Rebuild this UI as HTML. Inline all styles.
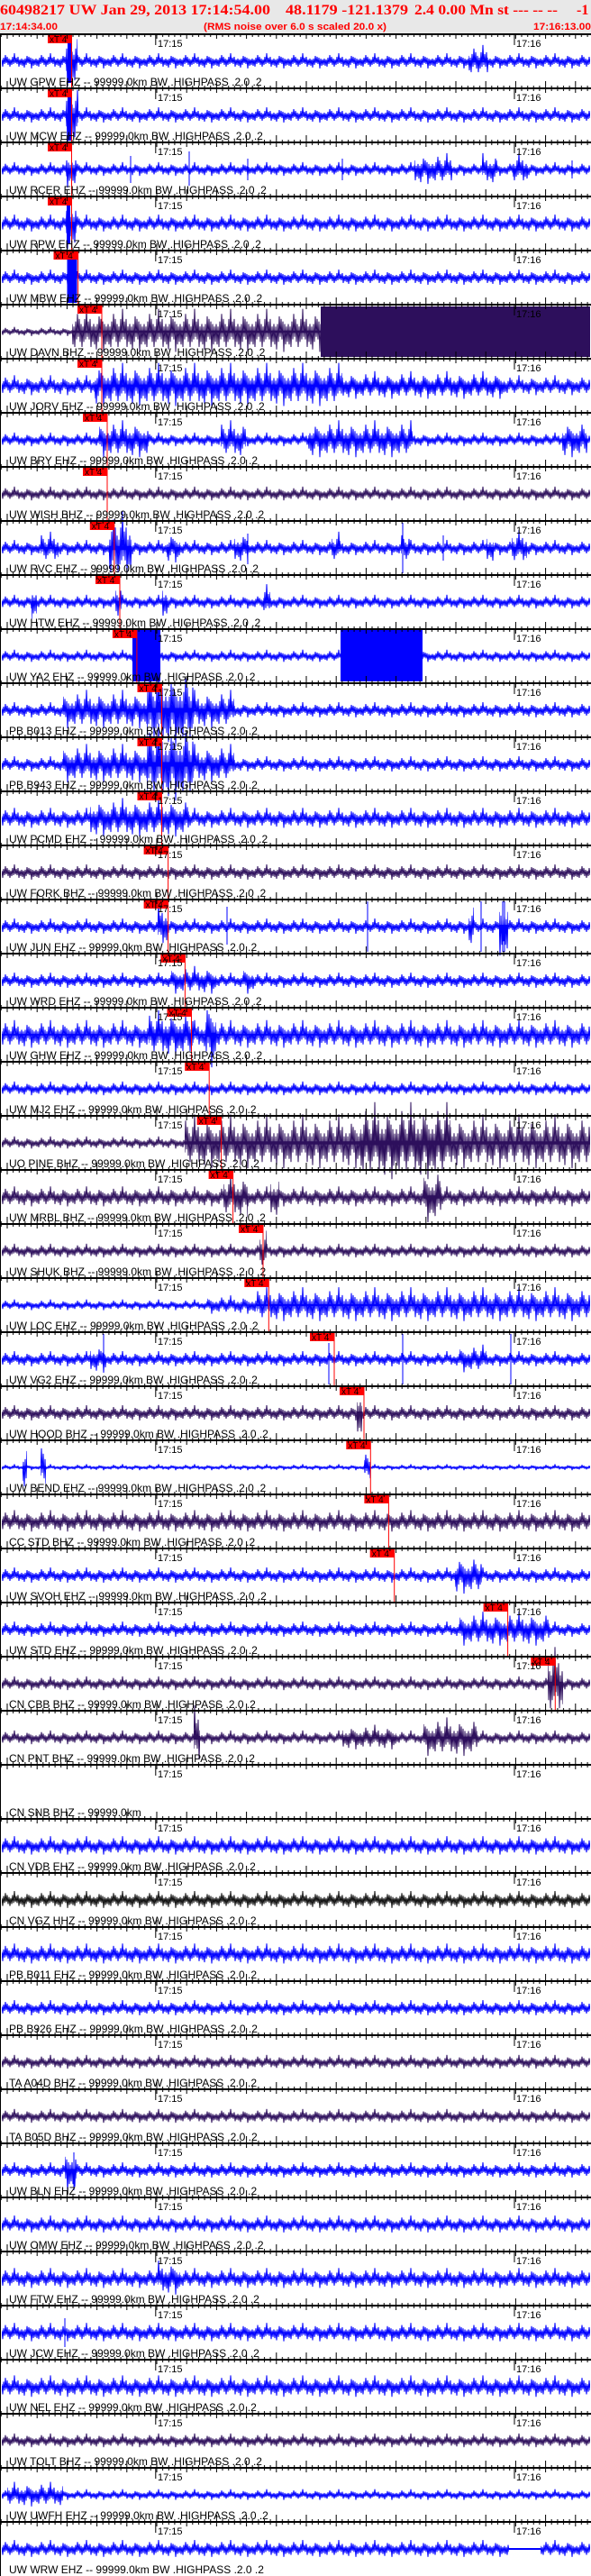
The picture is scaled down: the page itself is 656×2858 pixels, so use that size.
<!DOCTYPE html>
<html><head><meta charset="utf-8"><style>
html,body{margin:0;padding:0;background:#fff;}
svg{display:block;}
.l{font-family:"Liberation Sans",sans-serif;font-size:12px;fill:#000;}
.t{font-family:"Liberation Sans",sans-serif;font-size:11px;fill:#000;}
.x{font-family:"Liberation Sans",sans-serif;font-size:10px;fill:#000;}
.h1{font-family:"Liberation Serif",serif;font-weight:bold;font-size:16px;fill:#f00;}
.h2{font-family:"Liberation Sans",sans-serif;font-weight:bold;font-size:11px;fill:#f00;}
</style></head><body>
<svg width="656" height="2858" viewBox="0 0 656 2858" xmlns="http://www.w3.org/2000/svg">
<defs>
<polyline id="zz" fill="none" stroke-width="1" points="0,27 1,35 2,28 3,36 4,26 5,33 6,23 7,32 8,25 9,34 10,27 11,36 12,28 13,34 14,25 15,33 16,21 17,32 18,26 19,33 20,25 21,36 22,28 23,34 24,27 25,35 26,28 27,37 28,27 29,34 30,24 31,32 32,25 33,33 34,26 35,38 36,27 37,35 38,28 39,34 40,27"/>
<pattern id="pb" patternUnits="userSpaceOnUse" x="0" y="0" width="40" height="60"><use href="#zz" stroke="#0000ff"/><path d="M0 30H40" stroke="#0000ff"/></pattern>
<pattern id="pp" patternUnits="userSpaceOnUse" x="0" y="0" width="40" height="60"><use href="#zz" stroke="#2d0f5c"/><path d="M0 30H40" stroke="#2d0f5c"/></pattern>
<pattern id="pk" patternUnits="userSpaceOnUse" x="0" y="0" width="40" height="60"><use href="#zz" stroke="#111"/><path d="M0 30H40" stroke="#111"/></pattern>
<pattern id="tk" patternUnits="userSpaceOnUse" x="7.5" y="-8" width="33.2" height="14"><path d="M0.5 0V13M7.1 5V11M13.8 5V11M20.4 5V11M27 5V11" stroke="#000" stroke-width="1"/></pattern>
</defs>
<rect width="656" height="2858" fill="#fff"/>

<!-- Row 0 GPW -->
<g transform="translate(0,38)">
<rect x="2" width="653" height="60" fill="url(#pb)"/>
<rect x="73" width="13" height="60" fill="url(#pb)" transform="matrix(1 0 0 3.5 0 -75)"/>
<rect x="75" y="4" width="4" height="50" fill="#00f"/>
<rect x="520" width="22" height="60" fill="url(#pb)" transform="matrix(1 0 0 2 0 -30)"/>
</g>
<!-- Row 1 MCW -->
<g transform="translate(0,98)">
<rect x="2" width="653" height="60" fill="url(#pb)"/>
<rect x="73" width="14" height="60" fill="url(#pb)" transform="matrix(1 0 0 4 0 -90)"/>
<rect x="75" y="2" width="5" height="56" fill="#00f"/>
</g>
<!-- Row 2 RCER -->
<g transform="translate(0,158)">
<rect x="2" width="653" height="60" fill="url(#pb)" transform="matrix(1 0 0 0.9 0 3)"/>
<rect x="460" width="42" height="60" fill="url(#pb)" transform="matrix(1 0 0 2 0 -30)"/>
<rect x="535" width="17" height="60" fill="url(#pb)" transform="matrix(1 0 0 2 0 -30)"/>
<rect x="569" width="17" height="60" fill="url(#pb)" transform="matrix(1 0 0 2 0 -30)"/>
<rect x="73" width="12" height="60" fill="url(#pb)" transform="matrix(1 0 0 2.5 0 -45)"/>
<path d="M145 15V45M210 10V48M275 18V42M380 18V42M635 20V40" stroke="#00f"/>
</g>
<!-- Row 3 RPW -->
<g transform="translate(0,218)">
<rect x="2" width="653" height="60" fill="url(#pb)" transform="matrix(1 0 0 1.1 0 -3)"/>
<rect x="73" width="12" height="60" fill="url(#pb)" transform="matrix(1 0 0 3.5 0 -75)"/>
<rect x="74" y="6" width="4" height="46" fill="#00f"/>
</g>
<!-- Row 4 MBW -->
<g transform="translate(0,278)">
<rect x="2" width="653" height="60" fill="url(#pb)"/>
<rect x="74.5" y="2" width="11" height="56" fill="#00f"/>
</g>
<!-- Row 5 DAVN -->
<g transform="translate(0,338)">
<rect x="2" width="78" height="60" fill="url(#pp)" transform="matrix(1 0 0 0.6 0 12)"/>
<rect x="80" width="276" height="60" fill="url(#pp)" transform="matrix(1 0 0 2.8 0 -54)"/>
<rect x="356" y="2" width="299" height="56" fill="#2d0f5c"/>
</g>
<!-- Row 6 JORV -->
<g transform="translate(0,398)">
<rect x="2" width="653" height="60" fill="url(#pb)" transform="matrix(1 0 0 1.3 0 -9)"/>
<rect x="105" width="275" height="60" fill="url(#pb)" transform="matrix(1 0 0 2.8 0 -54)"/>
<rect x="380" width="180" height="60" fill="url(#pb)" transform="matrix(1 0 0 1.8 0 -24)"/>
</g>
<!-- Row 7 BRY -->
<g transform="translate(0,458)">
<rect x="2" width="653" height="60" fill="url(#pb)" transform="matrix(1 0 0 0.9 0 3)"/>
<rect x="110" width="55" height="60" fill="url(#pb)" transform="matrix(1 0 0 2.4 0 -42)"/>
<rect x="245" width="28" height="60" fill="url(#pb)" transform="matrix(1 0 0 2.4 0 -42)"/>
<rect x="342" width="116" height="60" fill="url(#pb)" transform="matrix(1 0 0 2.4 0 -42)"/>
<rect x="624" width="28" height="60" fill="url(#pb)" transform="matrix(1 0 0 2.4 0 -42)"/>
</g>
<!-- Row 8 WISH -->
<g transform="translate(0,518)">
<rect x="2" width="653" height="60" fill="url(#pp)" transform="matrix(1 0 0 0.9 0 3)"/>
</g>
<!-- Row 9 RVC -->
<g transform="translate(0,578)">
<rect x="2" width="653" height="60" fill="url(#pb)"/>
<rect x="121" width="25" height="60" fill="url(#pb)" transform="matrix(1 0 0 4.5 0 -105)"/>
<rect x="45" width="20" height="60" fill="url(#pb)" transform="matrix(1 0 0 2 0 -30)"/>
<rect x="185" width="15" height="60" fill="url(#pb)" transform="matrix(1 0 0 2 0 -30)"/>
<rect x="260" width="15" height="60" fill="url(#pb)" transform="matrix(1 0 0 2 0 -30)"/>
<rect x="368" width="10" height="60" fill="url(#pb)" transform="matrix(1 0 0 2 0 -30)"/>
<rect x="445" width="10" height="60" fill="url(#pb)" transform="matrix(1 0 0 2 0 -30)"/>
<rect x="540" width="8" height="60" fill="url(#pb)" transform="matrix(1 0 0 2 0 -30)"/>
<rect x="568" width="17" height="60" fill="url(#pb)" transform="matrix(1 0 0 2.2 0 -36)"/>
<path d="M447 2V58M275 14V48M492 16V44" stroke="#00f"/>
</g>
<!-- Row 10 HTW -->
<g transform="translate(0,638)">
<rect x="2" width="653" height="60" fill="url(#pb)" transform="matrix(1 0 0 0.9 0 3)"/>
<rect x="35" width="6" height="60" fill="url(#pb)" transform="matrix(1 0 0 2.5 0 -45)"/>
<rect x="128" width="7" height="60" fill="url(#pb)" transform="matrix(1 0 0 2.5 0 -45)"/>
<rect x="180" width="6" height="60" fill="url(#pb)" transform="matrix(1 0 0 2.5 0 -45)"/>
<rect x="292" width="8" height="60" fill="url(#pb)" transform="matrix(1 0 0 2.2 0 -36)"/>
</g>
<!-- Row 11 YA2 -->
<g transform="translate(0,698)">
<rect x="2" width="653" height="60" fill="url(#pb)" transform="matrix(1 0 0 0.8 0 6)"/>
<rect x="147" y="0" width="31" height="58" fill="#00f"/>
<rect x="378" y="0" width="91" height="58" fill="#00f"/>
</g>
<!-- Row 12 B913 -->
<g transform="translate(0,758)">
<rect x="2" width="653" height="60" fill="url(#pb)"/>
<rect x="70" width="93" height="60" fill="url(#pb)" transform="matrix(1 0 0 2.5 0 -45)"/>
<rect x="163" width="52" height="60" fill="url(#pb)" transform="matrix(1 0 0 5 0 -120)"/>
<rect x="215" width="45" height="60" fill="url(#pb)" transform="matrix(1 0 0 2.5 0 -45)"/>
</g>
<!-- Row 13 B013 -->
<g transform="translate(0,818)">
<rect x="2" width="653" height="60" fill="url(#pb)"/>
<rect x="70" width="93" height="60" fill="url(#pb)" transform="matrix(1 0 0 2.5 0 -45)"/>
<rect x="163" width="52" height="60" fill="url(#pb)" transform="matrix(1 0 0 5 0 -120)"/>
<rect x="215" width="45" height="60" fill="url(#pb)" transform="matrix(1 0 0 2.5 0 -45)"/>
</g>
<!-- Row 14 B943 -->
<g transform="translate(0,878)">
<rect x="2" width="653" height="60" fill="url(#pb)" transform="matrix(1 0 0 1.3 0 -9)"/>
<rect x="100" width="110" height="60" fill="url(#pb)" transform="matrix(1 0 0 2.5 0 -45)"/>
</g>
<!-- Row 15 PCMD -->
<g transform="translate(0,938)">
<rect x="2" width="653" height="60" fill="url(#pp)"/>
</g>
<!-- Row 16 FORK -->
<g transform="translate(0,998)">
<rect x="2" width="653" height="60" fill="url(#pb)"/>
<rect x="175" width="11" height="60" fill="url(#pb)" transform="matrix(1 0 0 3 0 -60)"/>
<rect x="520" width="6" height="60" fill="url(#pb)" transform="matrix(1 0 0 3 0 -60)"/>
<rect x="554" width="10" height="60" fill="url(#pb)" transform="matrix(1 0 0 4 0 -90)"/>
<path d="M252 8V50M408 2V58M534 2V58M560 2V58M558 2V58" stroke="#00f"/>
</g>
<!-- Row 17 JUN -->
<g transform="translate(0,1058)">
<rect x="2" width="653" height="60" fill="url(#pb)"/>
<rect x="190" width="50" height="60" fill="url(#pb)" transform="matrix(1 0 0 1.8 0 -24)"/>
<rect x="270" width="12" height="60" fill="url(#pb)" transform="matrix(1 0 0 1.8 0 -24)"/>
</g>
<!-- Row 18 WRD -->
<g transform="translate(0,1118)">
<rect x="2" width="653" height="60" fill="url(#pb)" transform="matrix(1 0 0 1.8 0 -24)"/>
<rect x="165" width="50" height="60" fill="url(#pb)" transform="matrix(1 0 0 3 0 -60)"/>
<rect x="228" width="12" height="60" fill="url(#pb)" transform="matrix(1 0 0 4.5 0 -105)"/>
</g>
<!-- Row 19 GHW -->
<g transform="translate(0,1178)">
<rect x="2" width="653" height="60" fill="url(#pb)" transform="matrix(1 0 0 0.9 0 3)"/>
</g>
<!-- Row 20 MJ2 -->
<g transform="translate(0,1238)">
<rect x="2" width="203" height="60" fill="url(#pp)" transform="matrix(1 0 0 0.8 0 6)"/>
<rect x="205" width="450" height="60" fill="url(#pp)" transform="matrix(1 0 0 3.5 0 -75)"/>
<rect x="400" width="100" height="60" fill="url(#pp)" transform="matrix(1 0 0 5 0 -120)"/>
</g>
<!-- Row 21 PINE -->
<g transform="translate(0,1298)">
<rect x="2" width="653" height="60" fill="url(#pp)" transform="matrix(1 0 0 1.3 0 -9)"/>
<rect x="248" width="27" height="60" fill="url(#pp)" transform="matrix(1 0 0 2.8 0 -54)"/>
<rect x="300" width="10" height="60" fill="url(#pp)" transform="matrix(1 0 0 2.8 0 -54)"/>
<rect x="470" width="20" height="60" fill="url(#pp)" transform="matrix(1 0 0 3.5 0 -75)"/>
</g>
<!-- Row 22 MRBL -->
<g transform="translate(0,1358)">
<rect x="2" width="653" height="60" fill="url(#pp)" transform="matrix(1 0 0 0.9 0 3)"/>
<rect x="288" width="8" height="60" fill="url(#pp)" transform="matrix(1 0 0 2.5 0 -45)"/>
</g>
<!-- Row 23 SHUK -->
<g transform="translate(0,1418)">
<rect x="2" width="228" height="60" fill="url(#pb)" transform="matrix(1 0 0 0.7 0 9)"/>
<rect x="230" width="55" height="60" fill="url(#pb)" transform="matrix(1 0 0 1.2 0 -6)"/>
<rect x="285" width="370" height="60" fill="url(#pb)" transform="matrix(1 0 0 2.2 0 -36)"/>
</g>
<!-- Row 24 LOC -->
<g transform="translate(0,1478)">
<rect x="2" width="653" height="60" fill="url(#pb)"/>
<rect x="100" width="18" height="60" fill="url(#pb)" transform="matrix(1 0 0 1.8 0 -24)"/>
<rect x="510" width="30" height="60" fill="url(#pb)" transform="matrix(1 0 0 1.8 0 -24)"/>
<path d="M115 2V45M365 12V58M447 2V58M567 2V58" stroke="#00f"/>
</g>
<!-- Row 25 VG2 -->
<g transform="translate(0,1538)">
<rect x="2" width="653" height="60" fill="url(#pp)"/>
<rect x="396" width="6" height="60" fill="url(#pp)" transform="matrix(1 0 0 4 0 -90)"/>
</g>
<!-- Row 26 HOOD -->
<g transform="translate(0,1598)">
<rect x="2" width="653" height="60" fill="url(#pb)" transform="matrix(1 0 0 0.4 0 18)"/>
<rect x="25" width="5" height="60" fill="url(#pb)" transform="matrix(1 0 0 3 0 -60)"/>
<rect x="45" width="6" height="60" fill="url(#pb)" transform="matrix(1 0 0 3 0 -60)"/>
<rect x="404" width="7" height="60" fill="url(#pb)" transform="matrix(1 0 0 2 0 -30)"/>
</g>
<!-- Row 27 BEND -->
<g transform="translate(0,1658)">
<rect x="2" width="653" height="60" fill="url(#pp)" transform="matrix(1 0 0 1.4 0 -12)"/>
</g>
<!-- Row 28 CC STD -->
<g transform="translate(0,1718)">
<rect x="2" width="653" height="60" fill="url(#pb)"/>
<rect x="505" width="30" height="60" fill="url(#pb)" transform="matrix(1 0 0 2.5 0 -45)"/>
</g>
<!-- Row 29 SVOH -->
<g transform="translate(0,1778)">
<rect x="2" width="653" height="60" fill="url(#pb)"/>
<rect x="510" width="100" height="60" fill="url(#pb)" transform="matrix(1 0 0 2.2 0 -36)"/>
</g>
<!-- Row 30 STD -->
<g transform="translate(0,1838)">
<rect x="2" width="653" height="60" fill="url(#pp)" transform="matrix(1 0 0 0.9 0 3)"/>
<rect x="608" width="17" height="60" fill="url(#pp)" transform="matrix(1 0 0 4.5 0 -105)"/>
</g>
<!-- Row 31 CBB -->
<g transform="translate(0,1898)">
<rect x="2" width="653" height="60" fill="url(#pp)" transform="matrix(1 0 0 0.9 0 3)"/>
<rect x="215" width="7" height="60" fill="url(#pp)" transform="matrix(1 0 0 4 0 -90)"/>
<rect x="380" width="60" height="60" fill="url(#pp)" transform="matrix(1 0 0 1.6 0 -18)"/>
<rect x="470" width="60" height="60" fill="url(#pp)" transform="matrix(1 0 0 2.5 0 -45)"/>
</g>
<!-- Row 32 PNT (empty) -->
<!-- Row 33 -->
<g transform="translate(0,2018)"><rect x="2" width="653" height="60" fill="url(#pb)" transform="matrix(1 0 0 1.2 0 -6)"/></g>
<g transform="translate(0,2078)"><rect x="2" width="653" height="60" fill="url(#pk)" transform="matrix(1 0 0 1.1 0 -3)"/></g>
<g transform="translate(0,2138)"><rect x="2" width="653" height="60" fill="url(#pb)" transform="matrix(1 0 0 1.3 0 -9)"/></g>
<g transform="translate(0,2198)"><rect x="2" width="653" height="60" fill="url(#pb)"/></g>
<g transform="translate(0,2258)"><rect x="2" width="653" height="60" fill="url(#pp)" transform="matrix(1 0 0 0.9 0 3)"/></g>
<g transform="translate(0,2318)"><rect x="2" width="653" height="60" fill="url(#pp)" transform="matrix(1 0 0 0.9 0 3)"/></g>
<g transform="translate(0,2378)"><rect x="2" width="653" height="60" fill="url(#pb)"/>
<rect x="72" width="13" height="60" fill="url(#pb)" transform="matrix(1 0 0 3 0 -60)"/><path d="M82 10V52" stroke="#00f"/></g>
<g transform="translate(0,2438)"><rect x="2" width="653" height="60" fill="url(#pb)" transform="matrix(1 0 0 1.1 0 -3)"/></g>
<g transform="translate(0,2498)"><rect x="2" width="653" height="60" fill="url(#pb)" transform="matrix(1 0 0 1.3 0 -9)"/>
<rect x="175" width="25" height="60" fill="url(#pb)" transform="matrix(1 0 0 2.2 0 -36)"/></g>
<g transform="translate(0,2558)"><rect x="2" width="653" height="60" fill="url(#pb)" transform="matrix(1 0 0 1.2 0 -6)"/>
<path d="M72 14V46" stroke="#00f"/></g>
<g transform="translate(0,2618)"><rect x="2" width="653" height="60" fill="url(#pb)" transform="matrix(1 0 0 1.4 0 -12)"/></g>
<g transform="translate(0,2678)"><rect x="2" width="653" height="60" fill="url(#pp)" transform="matrix(1 0 0 0.9 0 3)"/></g>
<g transform="translate(0,2738)"><rect x="2" width="653" height="60" fill="url(#pb)" transform="matrix(1 0 0 0.7 0 9)"/>
<rect x="8" width="62" height="60" fill="url(#pb)" transform="matrix(1 0 0 1.6 0 -18)"/></g>
<g transform="translate(0,2798)"><rect x="2" width="563" height="60" fill="url(#pb)" transform="matrix(1 0 0 1.1 0 -3)"/>
<path d="M565 30H600" stroke="#00f" stroke-width="2"/>
<rect x="600" width="55" height="60" fill="url(#pb)" transform="matrix(1 0 0 1.1 0 -3)"/></g>

<!-- Picks -->
<g fill="#f00">
<rect x="53" y="38" width="27" height="10"/><rect x="53" y="98" width="27" height="10"/><rect x="53" y="158" width="27" height="10"/><rect x="53" y="218" width="27" height="10"/>
<rect x="59.5" y="278" width="27" height="10"/><rect x="86" y="338" width="27" height="10"/><rect x="86" y="398" width="27" height="10"/>
<rect x="92" y="458" width="27" height="10"/><rect x="92" y="518" width="27" height="10"/><rect x="99.8" y="578" width="27" height="10"/>
<rect x="106" y="638" width="27" height="10"/><rect x="124.9" y="698" width="27" height="10"/><rect x="152.5" y="758" width="27" height="10"/>
<rect x="152.5" y="818" width="27" height="10"/><rect x="152.5" y="878" width="27" height="10"/><rect x="159.6" y="938" width="27" height="10"/>
<rect x="159.6" y="998" width="27" height="10"/><rect x="178.4" y="1058" width="27" height="10"/><rect x="185.5" y="1118" width="27" height="10"/>
<rect x="205.2" y="1178" width="27" height="10"/><rect x="218.6" y="1238" width="27" height="10"/><rect x="231.6" y="1298" width="27" height="10"/>
<rect x="265" y="1358" width="27" height="10"/><rect x="271.3" y="1418" width="27" height="10"/><rect x="344" y="1478" width="27" height="10"/>
<rect x="377" y="1538" width="27" height="10"/><rect x="384.3" y="1598" width="27" height="10"/><rect x="404.4" y="1658" width="27" height="10"/>
<rect x="410.7" y="1718" width="27" height="10"/><rect x="536.6" y="1778" width="27" height="10"/><rect x="589.3" y="1838" width="27" height="10"/>
</g>
<g stroke="#f00" stroke-width="1">
<path d="M79.5 38V278M86.6 278V338M113 338V458M119 458V578M126.8 578V638M133 638V698M151.9 698V758M179.5 758V938M186.6 938V1058M205.4 1058V1118M212.5 1118V1178M232.2 1178V1238M245.6 1238V1298M258.6 1298V1358M292 1358V1418M298.3 1418V1478M371 1478V1538M404 1538V1598M411.3 1598V1658M431.4 1658V1718M437.7 1718V1778M563.6 1778V1838M616.3 1838V1898"/>
</g>
<g class="x">
<text x="55" y="47">xT 4</text><text x="55" y="107">xT 4</text><text x="55" y="167">xT 4</text><text x="55" y="227">xT 4</text>
<text x="61.5" y="287">xT 4</text><text x="88" y="347">xT 4</text><text x="88" y="407">xT 4</text><text x="94" y="467">xT 4</text>
<text x="94" y="527">xT 4</text><text x="101.8" y="587">xT 4</text><text x="108" y="647">xT 4</text><text x="126.9" y="707">xT 4</text>
<text x="154.5" y="767">xT 4</text><text x="154.5" y="827">xT 4</text><text x="154.5" y="887">xT 4</text><text x="161.6" y="947">xT 4</text>
<text x="161.6" y="1007">xT 4</text><text x="180.4" y="1067">xT 4</text><text x="187.5" y="1127">xT 4</text><text x="207.2" y="1187">xT 4</text>
<text x="220.6" y="1247">xT 4</text><text x="233.6" y="1307">xT 4</text><text x="267" y="1367">xT 4</text><text x="273.3" y="1427">xT 4</text>
<text x="346" y="1487">xT 4</text><text x="379" y="1547">xT 4</text><text x="386.3" y="1607">xT 4</text><text x="406.4" y="1667">xT 4</text>
<text x="412.7" y="1727">xT 4</text><text x="538.6" y="1787">xT 4</text><text x="591.3" y="1847">xT 4</text>
</g>

<!-- Borders, ticks, time labels -->
<g id="rows">
<g transform="translate(0,38)"><rect y="-8" width="656" height="14" fill="url(#tk)"/><rect y="-1" width="656" height="2"/><path d="M172.8 0V12M571 0V12" stroke="#000"/><text class="t" x="175" y="14">17:15</text><text class="t" x="573" y="14">17:16</text><text class="l" x="10" y="57">UW GPW EHZ -- 99999.0km BW .HIGHPASS .2.0 .2</text></g>
<g transform="translate(0,98)"><rect y="-8" width="656" height="14" fill="url(#tk)"/><rect y="-1" width="656" height="2"/><path d="M172.8 0V12M571 0V12" stroke="#000"/><text class="t" x="175" y="14">17:15</text><text class="t" x="573" y="14">17:16</text><text class="l" x="10" y="57">UW MCW EHZ -- 99999.0km BW .HIGHPASS .2.0 .2</text></g>
<g transform="translate(0,158)"><rect y="-8" width="656" height="14" fill="url(#tk)"/><rect y="-1" width="656" height="2"/><path d="M172.8 0V12M571 0V12" stroke="#000"/><text class="t" x="175" y="14">17:15</text><text class="t" x="573" y="14">17:16</text><text class="l" x="10" y="57">UW RCER EHZ -- 99999.0km BW .HIGHPASS .2.0 .2</text></g>
<g transform="translate(0,218)"><rect y="-8" width="656" height="14" fill="url(#tk)"/><rect y="-1" width="656" height="2"/><path d="M172.8 0V12M571 0V12" stroke="#000"/><text class="t" x="175" y="14">17:15</text><text class="t" x="573" y="14">17:16</text><text class="l" x="10" y="57">UW RPW EHZ -- 99999.0km BW .HIGHPASS .2.0 .2</text></g>
<g transform="translate(0,278)"><rect y="-8" width="656" height="14" fill="url(#tk)"/><rect y="-1" width="656" height="2"/><path d="M172.8 0V12M571 0V12" stroke="#000"/><text class="t" x="175" y="14">17:15</text><text class="t" x="573" y="14">17:16</text><text class="l" x="10" y="57">UW MBW EHZ -- 99999.0km BW .HIGHPASS .2.0 .2</text></g>
<g transform="translate(0,338)"><rect y="-8" width="656" height="14" fill="url(#tk)"/><rect y="-1" width="656" height="2"/><path d="M172.8 0V12M571 0V12" stroke="#000"/><text class="t" x="175" y="14">17:15</text><text class="t" x="573" y="14">17:16</text><text class="l" x="10" y="57">UW DAVN BHZ -- 99999.0km BW .HIGHPASS .2.0 .2</text></g>
<g transform="translate(0,398)"><rect y="-8" width="656" height="14" fill="url(#tk)"/><rect y="-1" width="656" height="2"/><path d="M172.8 0V12M571 0V12" stroke="#000"/><text class="t" x="175" y="14">17:15</text><text class="t" x="573" y="14">17:16</text><text class="l" x="10" y="57">UW JORV EHZ -- 99999.0km BW .HIGHPASS .2.0 .2</text></g>
<g transform="translate(0,458)"><rect y="-8" width="656" height="14" fill="url(#tk)"/><rect y="-1" width="656" height="2"/><path d="M172.8 0V12M571 0V12" stroke="#000"/><text class="t" x="175" y="14">17:15</text><text class="t" x="573" y="14">17:16</text><text class="l" x="10" y="57">UW BRY EHZ -- 99999.0km BW .HIGHPASS .2.0 .2</text></g>
<g transform="translate(0,518)"><rect y="-8" width="656" height="14" fill="url(#tk)"/><rect y="-1" width="656" height="2"/><path d="M172.8 0V12M571 0V12" stroke="#000"/><text class="t" x="175" y="14">17:15</text><text class="t" x="573" y="14">17:16</text><text class="l" x="10" y="57">UW WISH BHZ -- 99999.0km BW .HIGHPASS .2.0 .2</text></g>
<g transform="translate(0,578)"><rect y="-8" width="656" height="14" fill="url(#tk)"/><rect y="-1" width="656" height="2"/><path d="M172.8 0V12M571 0V12" stroke="#000"/><text class="t" x="175" y="14">17:15</text><text class="t" x="573" y="14">17:16</text><text class="l" x="10" y="57">UW RVC EHZ -- 99999.0km BW .HIGHPASS .2.0 .2</text></g>
<g transform="translate(0,638)"><rect y="-8" width="656" height="14" fill="url(#tk)"/><rect y="-1" width="656" height="2"/><path d="M172.8 0V12M571 0V12" stroke="#000"/><text class="t" x="175" y="14">17:15</text><text class="t" x="573" y="14">17:16</text><text class="l" x="10" y="57">UW HTW EHZ -- 99999.0km BW .HIGHPASS .2.0 .2</text></g>
<g transform="translate(0,698)"><rect y="-8" width="656" height="14" fill="url(#tk)"/><rect y="-1" width="656" height="2"/><path d="M172.8 0V12M571 0V12" stroke="#000"/><text class="t" x="175" y="14">17:15</text><text class="t" x="573" y="14">17:16</text><text class="l" x="10" y="57">UW YA2 EHZ -- 99999.0km BW .HIGHPASS .2.0 .2</text></g>
<g transform="translate(0,758)"><rect y="-8" width="656" height="14" fill="url(#tk)"/><rect y="-1" width="656" height="2"/><path d="M172.8 0V12M571 0V12" stroke="#000"/><text class="t" x="175" y="14">17:15</text><text class="t" x="573" y="14">17:16</text><text class="l" x="10" y="57">PB B013 EHZ -- 99999.0km BW .HIGHPASS .2.0 .2</text></g>
<g transform="translate(0,818)"><rect y="-8" width="656" height="14" fill="url(#tk)"/><rect y="-1" width="656" height="2"/><path d="M172.8 0V12M571 0V12" stroke="#000"/><text class="t" x="175" y="14">17:15</text><text class="t" x="573" y="14">17:16</text><text class="l" x="10" y="57">PB B943 EHZ -- 99999.0km BW .HIGHPASS .2.0 .2</text></g>
<g transform="translate(0,878)"><rect y="-8" width="656" height="14" fill="url(#tk)"/><rect y="-1" width="656" height="2"/><path d="M172.8 0V12M571 0V12" stroke="#000"/><text class="t" x="175" y="14">17:15</text><text class="t" x="573" y="14">17:16</text><text class="l" x="10" y="57">UW PCMD EHZ -- 99999.0km BW .HIGHPASS .2.0 .2</text></g>
<g transform="translate(0,938)"><rect y="-8" width="656" height="14" fill="url(#tk)"/><rect y="-1" width="656" height="2"/><path d="M172.8 0V12M571 0V12" stroke="#000"/><text class="t" x="175" y="14">17:15</text><text class="t" x="573" y="14">17:16</text><text class="l" x="10" y="57">UW FORK BHZ -- 99999.0km BW .HIGHPASS .2.0 .2</text></g>
<g transform="translate(0,998)"><rect y="-8" width="656" height="14" fill="url(#tk)"/><rect y="-1" width="656" height="2"/><path d="M172.8 0V12M571 0V12" stroke="#000"/><text class="t" x="175" y="14">17:15</text><text class="t" x="573" y="14">17:16</text><text class="l" x="10" y="57">UW JUN EHZ -- 99999.0km BW .HIGHPASS .2.0 .2</text></g>
<g transform="translate(0,1058)"><rect y="-8" width="656" height="14" fill="url(#tk)"/><rect y="-1" width="656" height="2"/><path d="M172.8 0V12M571 0V12" stroke="#000"/><text class="t" x="175" y="14">17:15</text><text class="t" x="573" y="14">17:16</text><text class="l" x="10" y="57">UW WRD EHZ -- 99999.0km BW .HIGHPASS .2.0 .2</text></g>
<g transform="translate(0,1118)"><rect y="-8" width="656" height="14" fill="url(#tk)"/><rect y="-1" width="656" height="2"/><path d="M172.8 0V12M571 0V12" stroke="#000"/><text class="t" x="175" y="14">17:15</text><text class="t" x="573" y="14">17:16</text><text class="l" x="10" y="57">UW GHW EHZ -- 99999.0km BW .HIGHPASS .2.0 .2</text></g>
<g transform="translate(0,1178)"><rect y="-8" width="656" height="14" fill="url(#tk)"/><rect y="-1" width="656" height="2"/><path d="M172.8 0V12M571 0V12" stroke="#000"/><text class="t" x="175" y="14">17:15</text><text class="t" x="573" y="14">17:16</text><text class="l" x="10" y="57">UW MJ2 EHZ -- 99999.0km BW .HIGHPASS .2.0 .2</text></g>
<g transform="translate(0,1238)"><rect y="-8" width="656" height="14" fill="url(#tk)"/><rect y="-1" width="656" height="2"/><path d="M172.8 0V12M571 0V12" stroke="#000"/><text class="t" x="175" y="14">17:15</text><text class="t" x="573" y="14">17:16</text><text class="l" x="10" y="57">UO PINE BHZ -- 99999.0km BW .HIGHPASS .2.0 .2</text></g>
<g transform="translate(0,1298)"><rect y="-8" width="656" height="14" fill="url(#tk)"/><rect y="-1" width="656" height="2"/><path d="M172.8 0V12M571 0V12" stroke="#000"/><text class="t" x="175" y="14">17:15</text><text class="t" x="573" y="14">17:16</text><text class="l" x="10" y="57">UW MRBL BHZ -- 99999.0km BW .HIGHPASS .2.0 .2</text></g>
<g transform="translate(0,1358)"><rect y="-8" width="656" height="14" fill="url(#tk)"/><rect y="-1" width="656" height="2"/><path d="M172.8 0V12M571 0V12" stroke="#000"/><text class="t" x="175" y="14">17:15</text><text class="t" x="573" y="14">17:16</text><text class="l" x="10" y="57">UW SHUK BHZ -- 99999.0km BW .HIGHPASS .2.0 .2</text></g>
<g transform="translate(0,1418)"><rect y="-8" width="656" height="14" fill="url(#tk)"/><rect y="-1" width="656" height="2"/><path d="M172.8 0V12M571 0V12" stroke="#000"/><text class="t" x="175" y="14">17:15</text><text class="t" x="573" y="14">17:16</text><text class="l" x="10" y="57">UW LOC EHZ -- 99999.0km BW .HIGHPASS .2.0 .2</text></g>
<g transform="translate(0,1478)"><rect y="-8" width="656" height="14" fill="url(#tk)"/><rect y="-1" width="656" height="2"/><path d="M172.8 0V12M571 0V12" stroke="#000"/><text class="t" x="175" y="14">17:15</text><text class="t" x="573" y="14">17:16</text><text class="l" x="10" y="57">UW VG2 EHZ -- 99999.0km BW .HIGHPASS .2.0 .2</text></g>
<g transform="translate(0,1538)"><rect y="-8" width="656" height="14" fill="url(#tk)"/><rect y="-1" width="656" height="2"/><path d="M172.8 0V12M571 0V12" stroke="#000"/><text class="t" x="175" y="14">17:15</text><text class="t" x="573" y="14">17:16</text><text class="l" x="10" y="57">UW HOOD BHZ -- 99999.0km BW .HIGHPASS .2.0 .2</text></g>
<g transform="translate(0,1598)"><rect y="-8" width="656" height="14" fill="url(#tk)"/><rect y="-1" width="656" height="2"/><path d="M172.8 0V12M571 0V12" stroke="#000"/><text class="t" x="175" y="14">17:15</text><text class="t" x="573" y="14">17:16</text><text class="l" x="10" y="57">UW BEND EHZ -- 99999.0km BW .HIGHPASS .2.0 .2</text></g>
<g transform="translate(0,1658)"><rect y="-8" width="656" height="14" fill="url(#tk)"/><rect y="-1" width="656" height="2"/><path d="M172.8 0V12M571 0V12" stroke="#000"/><text class="t" x="175" y="14">17:15</text><text class="t" x="573" y="14">17:16</text><text class="l" x="10" y="57">CC STD BHZ -- 99999.0km BW .HIGHPASS .2.0 .2</text></g>
<g transform="translate(0,1718)"><rect y="-8" width="656" height="14" fill="url(#tk)"/><rect y="-1" width="656" height="2"/><path d="M172.8 0V12M571 0V12" stroke="#000"/><text class="t" x="175" y="14">17:15</text><text class="t" x="573" y="14">17:16</text><text class="l" x="10" y="57">UW SVOH EHZ -- 99999.0km BW .HIGHPASS .2.0 .2</text></g>
<g transform="translate(0,1778)"><rect y="-8" width="656" height="14" fill="url(#tk)"/><rect y="-1" width="656" height="2"/><path d="M172.8 0V12M571 0V12" stroke="#000"/><text class="t" x="175" y="14">17:15</text><text class="t" x="573" y="14">17:16</text><text class="l" x="10" y="57">UW STD EHZ -- 99999.0km BW .HIGHPASS .2.0 .2</text></g>
<g transform="translate(0,1838)"><rect y="-8" width="656" height="14" fill="url(#tk)"/><rect y="-1" width="656" height="2"/><path d="M172.8 0V12M571 0V12" stroke="#000"/><text class="t" x="175" y="14">17:15</text><text class="t" x="573" y="14">17:16</text><text class="l" x="10" y="57">CN CBB BHZ -- 99999.0km BW .HIGHPASS .2.0 .2</text></g>
<g transform="translate(0,1898)"><rect y="-8" width="656" height="14" fill="url(#tk)"/><rect y="-1" width="656" height="2"/><path d="M172.8 0V12M571 0V12" stroke="#000"/><text class="t" x="175" y="14">17:15</text><text class="t" x="573" y="14">17:16</text><text class="l" x="10" y="57">CN PNT BHZ -- 99999.0km BW .HIGHPASS .2.0 .2</text></g>
<g transform="translate(0,1958)"><rect y="-8" width="656" height="14" fill="url(#tk)"/><rect y="-1" width="656" height="2"/><path d="M172.8 0V12M571 0V12" stroke="#000"/><text class="t" x="175" y="14">17:15</text><text class="t" x="573" y="14">17:16</text><text class="l" x="10" y="57">CN SNB BHZ -- 99999.0km</text></g>
<g transform="translate(0,2018)"><rect y="-8" width="656" height="14" fill="url(#tk)"/><rect y="-1" width="656" height="2"/><path d="M172.8 0V12M571 0V12" stroke="#000"/><text class="t" x="175" y="14">17:15</text><text class="t" x="573" y="14">17:16</text><text class="l" x="10" y="57">CN VDB EHZ -- 99999.0km BW .HIGHPASS .2.0 .2</text></g>
<g transform="translate(0,2078)"><rect y="-8" width="656" height="14" fill="url(#tk)"/><rect y="-1" width="656" height="2"/><path d="M172.8 0V12M571 0V12" stroke="#000"/><text class="t" x="175" y="14">17:15</text><text class="t" x="573" y="14">17:16</text><text class="l" x="10" y="57">CN VGZ HHZ -- 99999.0km BW .HIGHPASS .2.0 .2</text></g>
<g transform="translate(0,2138)"><rect y="-8" width="656" height="14" fill="url(#tk)"/><rect y="-1" width="656" height="2"/><path d="M172.8 0V12M571 0V12" stroke="#000"/><text class="t" x="175" y="14">17:15</text><text class="t" x="573" y="14">17:16</text><text class="l" x="10" y="57">PB B011 EHZ -- 99999.0km BW .HIGHPASS .2.0 .2</text></g>
<g transform="translate(0,2198)"><rect y="-8" width="656" height="14" fill="url(#tk)"/><rect y="-1" width="656" height="2"/><path d="M172.8 0V12M571 0V12" stroke="#000"/><text class="t" x="175" y="14">17:15</text><text class="t" x="573" y="14">17:16</text><text class="l" x="10" y="57">PB B926 EHZ -- 99999.0km BW .HIGHPASS .2.0 .2</text></g>
<g transform="translate(0,2258)"><rect y="-8" width="656" height="14" fill="url(#tk)"/><rect y="-1" width="656" height="2"/><path d="M172.8 0V12M571 0V12" stroke="#000"/><text class="t" x="175" y="14">17:15</text><text class="t" x="573" y="14">17:16</text><text class="l" x="10" y="57">TA A04D BHZ -- 99999.0km BW .HIGHPASS .2.0 .2</text></g>
<g transform="translate(0,2318)"><rect y="-8" width="656" height="14" fill="url(#tk)"/><rect y="-1" width="656" height="2"/><path d="M172.8 0V12M571 0V12" stroke="#000"/><text class="t" x="175" y="14">17:15</text><text class="t" x="573" y="14">17:16</text><text class="l" x="10" y="57">TA B05D BHZ -- 99999.0km BW .HIGHPASS .2.0 .2</text></g>
<g transform="translate(0,2378)"><rect y="-8" width="656" height="14" fill="url(#tk)"/><rect y="-1" width="656" height="2"/><path d="M172.8 0V12M571 0V12" stroke="#000"/><text class="t" x="175" y="14">17:15</text><text class="t" x="573" y="14">17:16</text><text class="l" x="10" y="57">UW BLN EHZ -- 99999.0km BW .HIGHPASS .2.0 .2</text></g>
<g transform="translate(0,2438)"><rect y="-8" width="656" height="14" fill="url(#tk)"/><rect y="-1" width="656" height="2"/><path d="M172.8 0V12M571 0V12" stroke="#000"/><text class="t" x="175" y="14">17:15</text><text class="t" x="573" y="14">17:16</text><text class="l" x="10" y="57">UW OMW EHZ -- 99999.0km BW .HIGHPASS .2.0 .2</text></g>
<g transform="translate(0,2498)"><rect y="-8" width="656" height="14" fill="url(#tk)"/><rect y="-1" width="656" height="2"/><path d="M172.8 0V12M571 0V12" stroke="#000"/><text class="t" x="175" y="14">17:15</text><text class="t" x="573" y="14">17:16</text><text class="l" x="10" y="57">UW FTW EHZ -- 99999.0km BW .HIGHPASS .2.0 .2</text></g>
<g transform="translate(0,2558)"><rect y="-8" width="656" height="14" fill="url(#tk)"/><rect y="-1" width="656" height="2"/><path d="M172.8 0V12M571 0V12" stroke="#000"/><text class="t" x="175" y="14">17:15</text><text class="t" x="573" y="14">17:16</text><text class="l" x="10" y="57">UW JCW EHZ -- 99999.0km BW .HIGHPASS .2.0 .2</text></g>
<g transform="translate(0,2618)"><rect y="-8" width="656" height="14" fill="url(#tk)"/><rect y="-1" width="656" height="2"/><path d="M172.8 0V12M571 0V12" stroke="#000"/><text class="t" x="175" y="14">17:15</text><text class="t" x="573" y="14">17:16</text><text class="l" x="10" y="57">UW NEL EHZ -- 99999.0km BW .HIGHPASS .2.0 .2</text></g>
<g transform="translate(0,2678)"><rect y="-8" width="656" height="14" fill="url(#tk)"/><rect y="-1" width="656" height="2"/><path d="M172.8 0V12M571 0V12" stroke="#000"/><text class="t" x="175" y="14">17:15</text><text class="t" x="573" y="14">17:16</text><text class="l" x="10" y="57">UW TOLT BHZ -- 99999.0km BW .HIGHPASS .2.0 .2</text></g>
<g transform="translate(0,2738)"><rect y="-8" width="656" height="14" fill="url(#tk)"/><rect y="-1" width="656" height="2"/><path d="M172.8 0V12M571 0V12" stroke="#000"/><text class="t" x="175" y="14">17:15</text><text class="t" x="573" y="14">17:16</text><text class="l" x="10" y="57">UW UWFH EHZ -- 99999.0km BW .HIGHPASS .2.0 .2</text></g>
<g transform="translate(0,2798)"><rect y="-8" width="656" height="14" fill="url(#tk)"/><rect y="-1" width="656" height="2"/><path d="M172.8 0V12M571 0V12" stroke="#000"/><text class="t" x="175" y="14">17:15</text><text class="t" x="573" y="14">17:16</text><text class="l" x="10" y="57">UW WRW EHZ -- 99999.0km BW .HIGHPASS .2.0 .2</text></g>
</g>
<rect x="0" y="37" width="1" height="2821" fill="#000"/>

<!-- Header -->
<rect x="0" y="0" width="656" height="37" fill="#e8e8e8"/>
<text class="h1" x="0" y="16" textLength="300" lengthAdjust="spacingAndGlyphs">60498217 UW Jan 29, 2013 17:14:54.00</text>
<text class="h1" x="317" y="16" textLength="136" lengthAdjust="spacingAndGlyphs">48.1179 -121.1379</text>
<text class="h1" x="460" y="16" textLength="159" lengthAdjust="spacingAndGlyphs">2.4 0.00 Mn st --- -- --</text>
<text class="h1" x="640" y="16">-1</text>
<text class="h2" x="0" y="33" textLength="64" lengthAdjust="spacingAndGlyphs">17:14:34.00</text>
<text class="h2" x="226" y="33" textLength="203" lengthAdjust="spacingAndGlyphs">(RMS noise over 6.0 s scaled 20.0 x)</text>
<text class="h2" x="592" y="33" textLength="64" lengthAdjust="spacingAndGlyphs">17:16:13.00</text>
<rect x="0" y="37" width="656" height="2" fill="#000"/>
</svg>
</body></html>
